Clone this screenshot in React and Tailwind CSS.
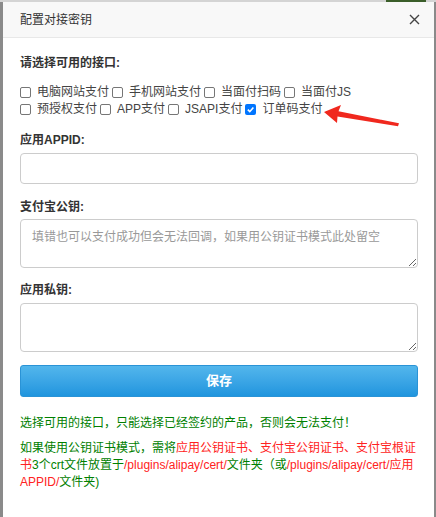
import { useState } from "react";

const font = {
  fontFamily: '"Liberation Sans", "Noto Sans CJK SC", sans-serif',
};

function Check({ label, checked }) {
  return (
    <label className="inline-flex items-center mr-[3px] h-[17px]">
      {checked ? (
        <span className="w-[11px] h-[11px] rounded-[2px] bg-[#0075ff] flex items-center justify-center mr-[6px]">
          <svg width="9" height="9" viewBox="0 0 10 10">
            <path d="M2 5.2 L4.2 7.4 L8.2 2.8" fill="none" stroke="#fff" strokeWidth="1.8" />
          </svg>
        </span>
      ) : (
        <span className="w-[11px] h-[11px] rounded-[2px] border border-[#767676] bg-white mr-[6px]" />
      )}
      <span>{label}</span>
    </label>
  );
}

export default function App() {
  const [appid, setAppid] = useState("");

  const apis = [
    { label: "电脑网站支付" },
    { label: "手机网站支付" },
    { label: "当面付扫码" },
    { label: "当面付JS" },
    { label: "预授权支付" },
    { label: "APP支付" },
    { label: "JSAPI支付" },
    { label: "订单码支付", checked: true },
  ];

  return (
    <div
      className="relative w-[436px] h-[517px] overflow-hidden bg-[#8a8a8a] pt-[2px] pl-[3px] pr-[2px]"
      style={font}
    >
      {/* backdrop bits */}
      <div className="absolute top-0 left-0 w-full h-[2px] bg-[#d4d4d4]" />
      <div className="absolute top-0 left-[386px] w-[40px] h-[2px] bg-[#3b5e2a]" />

      <div className="relative h-full bg-white">
        {/* Header */}
        <div className="h-[36px] bg-[#f8f8f8] border-b border-[#e8e8e8] flex items-center justify-between pl-[17px] pr-[14px]">
          <span className="text-[12px] text-[#333]">配置对接密钥</span>
          <svg width="11" height="11" viewBox="0 0 11 11">
            <path d="M1 1 L10 10 M10 1 L1 10" stroke="#444" strokeWidth="1.4" />
          </svg>
        </div>

        {/* Body */}
        <div className="pl-[17px] pr-[16px] pt-[15px] text-[12px] text-[#333]">
          <div className="font-bold leading-[20px]">请选择可用的接口:</div>
          <div className="mt-[11px] flex flex-wrap leading-[17px] text-[#444]">
            {apis.map((a, i) => (
              <Check key={i} label={a.label} checked={a.checked} />
            ))}
          </div>

          <div className="mt-[12px] font-bold leading-[20px]">应用APPID:</div>
          <input
            type="text"
            value={appid}
            onChange={(e) => setAppid(e.target.value)}
            className="mt-[3px] block w-full h-[31px] border border-[#ccc] rounded-[4px] px-[11px] outline-none"
          />

          <div className="mt-[13px] font-bold leading-[20px]">支付宝公钥:</div>
          <textarea
            placeholder="填错也可以支付成功但会无法回调，如果用公钥证书模式此处留空"
            className="mt-[2px] block w-full h-[49px] border border-[#ccc] rounded-[4px] px-[11px] py-[8px] leading-[18px] outline-none placeholder-[#999]"
          />

          <div className="mt-[12px] font-bold leading-[20px]">应用私钥:</div>
          <textarea className="mt-[3px] block w-full h-[49px] border border-[#ccc] rounded-[4px] px-[11px] py-[8px] leading-[18px] outline-none" />

          <button className="mt-[13px] w-full h-[32px] rounded-[3px] border border-[#2a93d6] bg-gradient-to-b from-[#52b6ec] to-[#1f95de] text-white font-bold text-[13px]">
            保存
          </button>

          <p className="mt-[18px] leading-[17px] text-[#008000]">
            选择可用的接口，只能选择已经签约的产品，否则会无法支付！
          </p>
          <p className="mt-[8px] leading-[17px] text-[#008000]">
            如果使用公钥证书模式，需将
            <span className="text-[#f22]">应用公钥证书、支付宝公钥证书、支付宝根证书</span>
            3个crt文件放置于
            <span className="text-[#f22]">/plugins/alipay/cert/</span>
            文件夹（或
            <span className="text-[#f22]">/plugins/alipay/cert/应用APPID/</span>
            文件夹)
          </p>
        </div>
      </div>

      {/* red arrow pointing at the checked option */}
      <svg className="absolute left-0 top-0 pointer-events-none" width="436" height="517">
        <polygon
          points="324,112 341,105 338.5,111.2 399,123.2 398,126.2 337.5,116.5 337,123"
          fill="#f0281e"
        />
      </svg>
    </div>
  );
}
